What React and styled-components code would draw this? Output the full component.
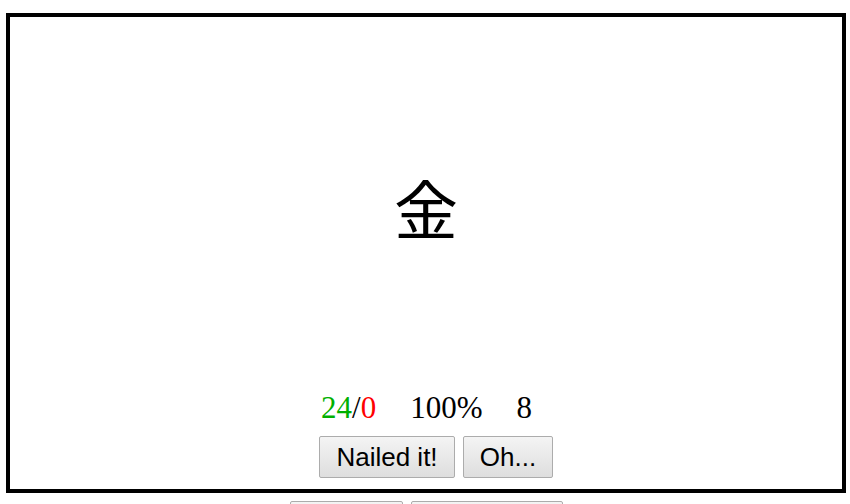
import React from "react";
import styled, { createGlobalStyle } from "styled-components";

const Global = createGlobalStyle`
  html, body { margin: 0; padding: 0; background: #fff; }
  body { font-family: "Liberation Serif", "Times New Roman", serif; }
`;

const Page = styled.div`
  padding: 13px 4px 0 6px;
`;

const Card = styled.div`
  border: 4px solid #000;
  height: 472px;
  display: flex;
  flex-direction: column;
  align-items: center;
`;

const Kanji = styled.div`
  flex: 1;
  display: flex;
  align-items: center;
  justify-content: center;
  font-family: "Noto Sans CJK JP", "Noto Sans CJK SC", serif;
  font-size: 64px;
  padding-top: 4px;
`;

const Stats = styled.div`
  display: flex;
  gap: 34px;
  font-size: 31px;
  line-height: 36px;
  margin-left: 1px;
`;

const Num = styled.span`
  color: ${(p) => p.$color || "#000"};
`;

const ButtonRow = styled.div`
  display: flex;
  gap: 8px;
  justify-content: center;
  margin: ${(p) => p.$margin || "0"};
`;

const Button = styled.button`
  font-family: "Liberation Sans", Arial, sans-serif;
  font-size: 26px;
  line-height: 30px;
  height: 42px;
  width: ${(p) => p.$w}px;
  padding: 0;
  color: #000;
  background: linear-gradient(#f4f4f4, #dedede);
  border: 1px solid #acacac;
  border-radius: 2px;
`;

export default function App() {
  return (
    <>
      <Global />
      <Page>
        <Card>
          <Kanji>金</Kanji>
          <Stats>
            <span>
              <Num $color="#00b000">24</Num>/<Num $color="#ff0000">0</Num>
            </span>
            <span>100%</span>
            <span>8</span>
          </Stats>
          <ButtonRow $margin="10px 0 11px 20px">
            <Button $w={136}>Nailed it!</Button>
            <Button $w={90}>Oh...</Button>
          </ButtonRow>
        </Card>
        <ButtonRow $margin="8px 0 0">
          <Button $w={113} aria-label="Show" />
          <Button $w={152} aria-label="Settings" />
        </ButtonRow>
      </Page>
    </>
  );
}
